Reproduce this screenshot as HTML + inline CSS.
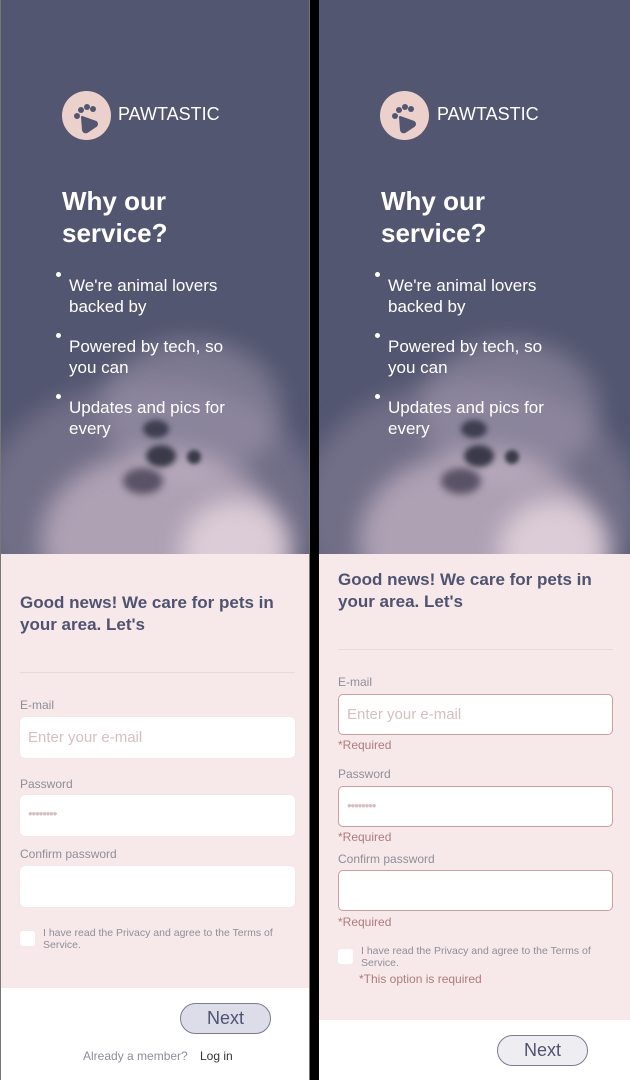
<!DOCTYPE html>
<html><head><meta charset="utf-8"><style>
*{margin:0;padding:0;box-sizing:border-box}
body{width:630px;height:1080px;background:#000;position:relative;overflow:hidden;font-family:"Liberation Sans",Arial,sans-serif}
.p{position:absolute;top:0;width:310px;height:1080px;background:#fff;overflow:hidden}
.hero{position:absolute;left:0;top:0;width:100%;height:554px;background:#535670;overflow:hidden}
.dog{position:absolute;border-radius:50%;filter:blur(12px)}
.a{position:absolute;white-space:nowrap}
.logo{position:absolute;left:61px;top:91px;width:49px;height:49px;border-radius:50%;background:#ecd0cc}
.form{position:absolute;left:0;top:554px;width:100%;background:#f7e9e9}
.in{position:absolute;background:#fff;border-radius:5px;height:41px;font-size:15px;color:#d7bfc1;padding:12px 0 0 8px}
.lbl{position:absolute;font-size:12px;color:#8e8e9a}
.req{position:absolute;font-size:12px;color:#b07a7c}
.cb{position:absolute;width:15px;height:15px;background:#fff;border-radius:3px}
.ct{position:absolute;font-size:10.5px;color:#8e8e9a;line-height:12px;width:250px}
.btn{position:absolute;width:91px;height:31px;border:1px solid #7a7c90;border-radius:16px;font-size:18px;color:#4f5270;text-align:center;line-height:29px}
h1{position:absolute;font-size:26px;color:#fff;line-height:32px;font-weight:bold}
.b{position:absolute;font-size:17px;color:#fff;line-height:21px}
.d{position:absolute;width:5px;height:5px;border-radius:50%;background:#fff}
.h2{position:absolute;font-size:17px;font-weight:bold;color:#4f5270;line-height:22px}
.pw{font-size:13px;padding-top:11px;letter-spacing:-1px}
</style></head><body>

<!-- LEFT -->
<div class="p" style="left:0;border-left:1px solid #777;border-right:1px solid #777">
 <div class="hero">
  <div class="dog" style="left:-20px;top:380px;width:340px;height:260px;background:rgba(150,140,165,.45)"></div>
  <div class="dog" style="left:100px;top:340px;width:180px;height:140px;background:rgba(165,155,178,.5)"></div>
  <div class="dog" style="left:40px;top:450px;width:240px;height:180px;background:rgba(215,195,210,.6)"></div>
  <div class="dog" style="left:180px;top:500px;width:110px;height:100px;background:rgba(240,222,230,.7)"></div>
  <div class="dog" style="left:142px;top:420px;width:26px;height:18px;background:#3e3e50;filter:blur(3px)"></div>
  <div class="dog" style="left:145px;top:445px;width:30px;height:22px;background:#3a3a48;filter:blur(3px)"></div>
  <div class="dog" style="left:186px;top:450px;width:14px;height:14px;background:#3a3a48;filter:blur(2px)"></div>
  <div class="dog" style="left:122px;top:468px;width:40px;height:26px;background:#5a5266;filter:blur(4px)"></div>
 </div>
 <div class="logo"><svg width="49" height="49" viewBox="0 0 49 49"><circle cx="19" cy="19" r="3" fill="#535670"/><circle cx="25" cy="16" r="3" fill="#535670"/><circle cx="31" cy="18" r="3" fill="#535670"/><circle cx="15" cy="25" r="3" fill="#535670"/><path d="M20 26 L34 31 Q36 33 34 35 L25 41 Q22 42 21 39 Z" fill="#535670" stroke="#535670" stroke-width="2" stroke-linejoin="round"/></svg></div>
 <div class="a" style="left:117px;top:104px;font-size:18px;color:#fff">PAWTASTIC</div>
 <h1 style="left:61px;top:185px">Why our<br>service?</h1>
 <div class="d" style="left:55px;top:272px"></div><div class="b" style="left:68px;top:275px">We're animal lovers<br>backed by</div>
 <div class="d" style="left:55px;top:333px"></div><div class="b" style="left:68px;top:336px">Powered by tech, so<br>you can</div>
 <div class="d" style="left:55px;top:394px"></div><div class="b" style="left:68px;top:397px">Updates and pics for<br>every</div>
 <div class="form" style="height:434px"></div>
 <div class="h2" style="left:19px;top:592px">Good news! We care for pets in<br>your area. Let's</div>
 <div class="a" style="left:19px;top:672px;width:275px;height:1px;background:#ead9da"></div>
 <div class="lbl" style="left:19px;top:698px">E-mail</div>
 <div class="in" style="left:19px;top:717px;width:275px;box-shadow:0 0 1px #e8d8d8">Enter your e-mail</div>
 <div class="lbl" style="left:19px;top:777px">Password</div>
 <div class="in pw" style="left:19px;top:795px;width:275px;box-shadow:0 0 1px #e8d8d8">••••••••</div>
 <div class="lbl" style="left:19px;top:847px">Confirm password</div>
 <div class="in" style="left:19px;top:866px;width:275px;box-shadow:0 0 1px #e8d8d8"></div>
 <div class="cb" style="left:19px;top:931px"></div>
 <div class="ct" style="left:42px;top:927px">I have read the Privacy and agree to the Terms of Service.</div>
 <div class="btn" style="left:179px;top:1003px;background:#dcdde8">Next</div>
 <div class="a" style="left:82px;top:1049px;font-size:12px;color:#8e8e9a">Already a member?</div>
 <div class="a" style="left:199px;top:1049px;font-size:12px;color:#333">Log in</div>
</div>

<!-- RIGHT -->
<div class="p" style="left:319px;width:311px">
 <div class="hero">
  <div class="dog" style="left:-20px;top:380px;width:340px;height:260px;background:rgba(150,140,165,.45)"></div>
  <div class="dog" style="left:100px;top:340px;width:180px;height:140px;background:rgba(165,155,178,.5)"></div>
  <div class="dog" style="left:40px;top:450px;width:240px;height:180px;background:rgba(215,195,210,.6)"></div>
  <div class="dog" style="left:180px;top:500px;width:110px;height:100px;background:rgba(240,222,230,.7)"></div>
  <div class="dog" style="left:142px;top:420px;width:26px;height:18px;background:#3e3e50;filter:blur(3px)"></div>
  <div class="dog" style="left:145px;top:445px;width:30px;height:22px;background:#3a3a48;filter:blur(3px)"></div>
  <div class="dog" style="left:186px;top:450px;width:14px;height:14px;background:#3a3a48;filter:blur(2px)"></div>
  <div class="dog" style="left:122px;top:468px;width:40px;height:26px;background:#5a5266;filter:blur(4px)"></div>
 </div>
 <div class="logo"><svg width="49" height="49" viewBox="0 0 49 49"><circle cx="19" cy="19" r="3" fill="#535670"/><circle cx="25" cy="16" r="3" fill="#535670"/><circle cx="31" cy="18" r="3" fill="#535670"/><circle cx="15" cy="25" r="3" fill="#535670"/><path d="M20 26 L34 31 Q36 33 34 35 L25 41 Q22 42 21 39 Z" fill="#535670" stroke="#535670" stroke-width="2" stroke-linejoin="round"/></svg></div>
 <div class="a" style="left:118px;top:104px;font-size:18px;color:#fff">PAWTASTIC</div>
 <h1 style="left:62px;top:185px">Why our<br>service?</h1>
 <div class="d" style="left:56px;top:272px"></div><div class="b" style="left:69px;top:275px">We're animal lovers<br>backed by</div>
 <div class="d" style="left:56px;top:333px"></div><div class="b" style="left:69px;top:336px">Powered by tech, so<br>you can</div>
 <div class="d" style="left:56px;top:394px"></div><div class="b" style="left:69px;top:397px">Updates and pics for<br>every</div>
 <div class="form" style="height:466px"></div>
 <div class="h2" style="left:19px;top:569px">Good news! We care for pets in<br>your area. Let's</div>
 <div class="a" style="left:19px;top:649px;width:275px;height:1px;background:#ead9da"></div>
 <div class="lbl" style="left:19px;top:675px">E-mail</div>
 <div class="in" style="left:19px;top:694px;width:275px;border:1px solid #c9a09f;padding-top:11px">Enter your e-mail</div>
 <div class="req" style="left:19px;top:738px">*Required</div>
 <div class="lbl" style="left:19px;top:767px">Password</div>
 <div class="in pw" style="left:19px;top:786px;width:275px;border:1px solid #c9a09f">••••••••</div>
 <div class="req" style="left:19px;top:830px">*Required</div>
 <div class="lbl" style="left:19px;top:852px">Confirm password</div>
 <div class="in" style="left:19px;top:870px;width:275px;border:1px solid #c9a09f"></div>
 <div class="req" style="left:19px;top:915px">*Required</div>
 <div class="cb" style="left:19px;top:949px"></div>
 <div class="ct" style="left:42px;top:945px">I have read the Privacy and agree to the Terms of Service.</div>
 <div class="req" style="left:40px;top:972px">*This option is required</div>
 <div class="btn" style="left:178px;top:1035px;background:#eeeef2">Next</div>
</div>
</body></html>
